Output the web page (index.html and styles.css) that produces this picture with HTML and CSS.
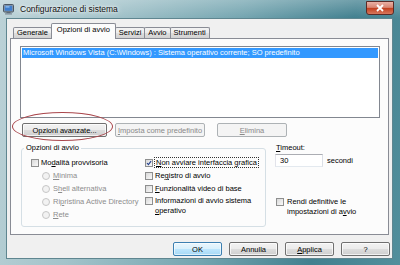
FILE: index.html
```html
<!DOCTYPE html>
<html lang="it">
  <head>
    <title>Configurazione di sistema</title>
    <link rel="stylesheet" href="styles.css">
  </head>

  <body>
    <div class="window">
      <div class="titlebar">
        <svg class="app-icon" viewBox="0 0 11 11">
          <rect x="0.5" y="0.5" width="10" height="7.5" rx="1" fill="#8a97a4" stroke="#4b5866" />
          <rect x="1.8" y="1.8" width="7.4" height="5" fill="#3f7fcf" />
          <rect x="2.5" y="2.3" width="4" height="1.2" fill="#9cc8f2" />
          <rect x="3.5" y="8" width="4" height="1.3" fill="#5d6a77" />
          <rect x="2" y="9.3" width="7" height="1.2" fill="#7b8895" />
        </svg>
        <span class="title">Configurazione di sistema</span>
        <div class="close">
          <svg viewBox="0 0 10 8" class="close-x">
            <path d="M2 1 L8 7 M8 1 L2 7" stroke="#fff" stroke-width="1.8" />
          </svg>
        </div>
      </div>

      <div class="client">
        <div class="tabs">
          <div class="tab">Generale</div>
          <div class="tab active">Opzioni di avvio</div>
          <div class="tab">Servizi</div>
          <div class="tab">Avvio</div>
          <div class="tab">Strumenti</div>
        </div>

        <div class="panel">
          <div class="os-list">
            <div class="os-item selected">Microsoft Windows Vista (C:\Windows) : Sistema operativo corrente; SO predefinito</div>
          </div>

          <div class="list-buttons">
            <button class="btn adv">Opzioni avanzate...</button>
            <button class="btn default-os" disabled><u>I</u>mposta come predefinito</button>
            <button class="btn remove" disabled><u>E</u>limina</button>
          </div>
          <!-- annotation drawn over the screenshot -->
          <span class="ring"></span>

          <div class="boot-area">
            <fieldset class="boot-options">
              <legend>Opzioni di avvio</legend>
              <div class="col col-left">
                <div class="check"><span class="box"></span>Mo<u>d</u>alità provvisoria</div>
                <div class="radio"><span class="dot"></span><u>M</u>inima</div>
                <div class="radio"><span class="dot"></span>S<u>h</u>ell alternativa</div>
                <div class="radio"><span class="dot"></span>Ri<u>p</u>ristina Active Directory</div>
                <div class="radio"><span class="dot"></span><u>R</u>ete</div>
              </div>
              <div class="col col-right">
                <div class="check">
                  <span class="box">
                    <svg viewBox="0 0 8 8" class="tick">
                      <path d="M1.3 4 L3.2 6.2 L6.8 1.4" fill="none" stroke="#23408e" stroke-width="1.5" />
                    </svg>
                  </span>
                  <span class="focus"><u>N</u>on avviare interfaccia grafica</span>
                </div>
                <div class="check"><span class="box"></span>Re<u>g</u>istro di avvio</div>
                <div class="check"><span class="box"></span><u>F</u>unzionalità video di base</div>
                <div class="check wrap"><span class="box"></span><span class="wrap-text">Informazioni di avvio sistema <span class="nowrap"><u>o</u>perativo</span></span></div>
              </div>
            </fieldset>

            <div class="side">
              <div class="timeout-label"><u>T</u>imeout:</div>
              <div class="timeout-row">
                <span class="field">30</span>
                <span>secondi</span>
              </div>
              <div class="check wrap persist"><span class="box"></span><span class="wrap-text">Rendi definitive le <span class="nowrap">impostazioni di a<u>v</u>vio</span></span></div>
            </div>
          </div>
        </div>

        <div class="dialog-buttons">
          <button class="btn primary">OK</button>
          <button class="btn">Annulla</button>
          <button class="btn"><u>A</u>pplica</button>
          <button class="btn">?</button>
        </div>
      </div>
    </div>
  </body>
</html>
```

FILE: styles.css
```css
* {
  box-sizing: border-box;
}

body {
  margin: 0;
  font-family: "Liberation Sans", Arial, sans-serif;
  font-size: 7.5px;
  color: #000;
}

u {
  text-decoration-thickness: 1px;
  text-underline-offset: 1px;
}

.window {
  width: 400px;
  height: 265px;
  display: flex;
  flex-direction: column;
  overflow: hidden;
  background:
    linear-gradient(to bottom, rgba(255, 255, 255, 0.25), rgba(255, 255, 255, 0) 18px),
    linear-gradient(100deg, #bcd2d7 0%, #a3c3ca 25%, #74a5b0 55%, #42808f 80%, #528f9c 100%);
}

.titlebar {
  flex: none;
  height: 18px;
  display: flex;
  align-items: center;
  padding-left: 3px;
}

.app-icon {
  width: 11px;
  height: 11px;
}

.title {
  margin-left: 6px;
  font-size: 8.5px;
  color: #111;
  text-shadow: 0 0 3px #fff, 0 0 6px rgba(255, 255, 255, 0.9);
}

.close {
  margin-left: auto;
  margin-right: 6px;
  align-self: flex-start;
  margin-top: 1px;
  width: 28px;
  height: 14px;
  border: 1px solid #5a2a26;
  border-radius: 0 0 3px 3px;
  background: linear-gradient(#e9b1a5, #d88572 45%, #c2401f 52%, #d7785e);
  display: flex;
  align-items: center;
  justify-content: center;
}

.close-x {
  width: 10px;
  height: 8px;
}

.client {
  flex: none;
  height: 241px;
  margin: 0 7px 0 6px;
  padding-top: 4px;
  background-color: #f0f0f0;
  border: 1px solid #5f8690;
  display: flex;
  flex-direction: column;
}

/* tabs */

.tabs {
  display: flex;
  align-items: flex-end;
  height: 15px;
  margin-left: 6px;
  position: relative;
  z-index: 1;
}

.tab {
  height: 11px;
  line-height: 10px;
  padding: 0 3px;
  margin-right: -1px;
  border: 1px solid #898c95;
  border-bottom: none;
  border-radius: 2px 2px 0 0;
  background: linear-gradient(#f3f3f3, #ebebeb 50%, #dedede 50%, #d2d2d2);
}

.tab.active {
  height: 16px;
  margin-bottom: -1px;
  padding: 1px 5px 0;
  background: #fcfcfc;
  position: relative;
  z-index: 1;
}

.panel {
  flex: none;
  height: 197px;
  margin: 0 3px;
  padding: 7px 8px 0 9px;
  background-color: #fcfcfc;
  border: 1px solid #898c95;
  position: relative;
}

/* os list */

.os-list {
  height: 72px;
  padding: 1px;
  background-color: #fff;
  border: 1px solid #828790;
}

.os-item {
  height: 10px;
  line-height: 10px;
  padding-left: 1px;
  white-space: nowrap;
}

.os-item.selected {
  background-color: #3399ff;
  color: #fff;
}

.list-buttons {
  display: flex;
  margin-top: 5px;
  padding-left: 2px;
}

.btn {
  height: 14px;
  padding: 0;
  font-family: inherit;
  font-size: 7.5px;
  color: #000;
  border: 1px solid #707070;
  border-radius: 2px;
  background: linear-gradient(#f2f2f2, #ebebeb 50%, #dddddd 50%, #cfcfcf);
  box-shadow: inset 0 0 0 1px rgba(255, 255, 255, 0.7);
}

.btn:disabled {
  color: #8a8a8a;
  border-color: #adb2b5;
  background: #f4f4f4;
  box-shadow: none;
}

.btn.adv {
  width: 85px;
}

.btn.default-os {
  width: 90px;
  margin-left: 8px;
}

.btn.remove {
  width: 70px;
  margin-left: 12px;
}

.ring {
  position: absolute;
  left: 1px;
  top: 73px;
  width: 101px;
  height: 29px;
  border: 1px solid #a9464c;
  border-radius: 50%;
}

/* boot options */

.boot-area {
  display: flex;
  margin-top: 6px;
}

.boot-options {
  display: flex;
  width: 245px;
  height: 84px;
  margin: 0 0 0 1px;
  padding: 3px 0 0 9px;
  border: 1px solid #d5dfe5;
  border-radius: 3px;
}

.boot-options legend {
  padding: 0 2px;
  margin-left: -7px;
  line-height: 10px;
}

.col-left {
  width: 114px;
}

.check,
.radio {
  display: flex;
  align-items: center;
  height: 13px;
  white-space: nowrap;
}

.box {
  flex: none;
  width: 8px;
  height: 8px;
  margin-right: 2px;
  border: 1px solid #8e8f8f;
  background: linear-gradient(135deg, #d8d8d8, #fafafa);
  display: flex;
}

.tick {
  width: 6px;
  height: 6px;
}

.focus {
  outline: 1px dotted #333;
  outline-offset: 0;
  padding: 0 1px;
}

.radio {
  padding-left: 11px;
  color: #8d8d8d;
}

.dot {
  flex: none;
  width: 8px;
  height: 8px;
  margin-right: 3px;
  border: 1px solid #c6c6c6;
  border-radius: 50%;
  background: #f2f2f2;
}

.check.wrap {
  height: auto;
  align-items: flex-start;
  white-space: normal;
  padding-top: 2px;
}

.wrap-text {
  line-height: 10px;
  margin-top: -1px;
}

.nowrap {
  white-space: nowrap;
}

.col-right .wrap-text {
  width: 104px;
}

.side {
  margin-left: 9px;
  width: 105px;
}

.timeout-label {
  line-height: 10px;
  margin-left: 1px;
}

.timeout-row {
  display: flex;
  align-items: center;
  margin-top: 1px;
}

.field {
  width: 48px;
  height: 13px;
  line-height: 11px;
  padding-left: 4px;
  margin-right: 4px;
  background-color: #fff;
  border: 1px solid #abadb3;
  border-color: #abadb3 #dbdfe6 #e3e9ef #e2e3ea;
}

.persist {
  margin-top: 29px;
  margin-left: 1px;
}

.persist .box {
  margin-right: 3px;
}

/* dialog buttons */

.dialog-buttons {
  display: flex;
  justify-content: flex-end;
  gap: 7px;
  margin-top: 7px;
  padding-right: 2px;
}

.dialog-buttons .btn {
  width: 49px;
}

.btn.primary {
  border-color: #3c7fb1;
  background: linear-gradient(#eaf6fd, #d9f0fc 50%, #bee6fd 50%, #a7d9f5);
  box-shadow: inset 0 0 0 1px rgba(255, 255, 255, 0.6);
}
```
